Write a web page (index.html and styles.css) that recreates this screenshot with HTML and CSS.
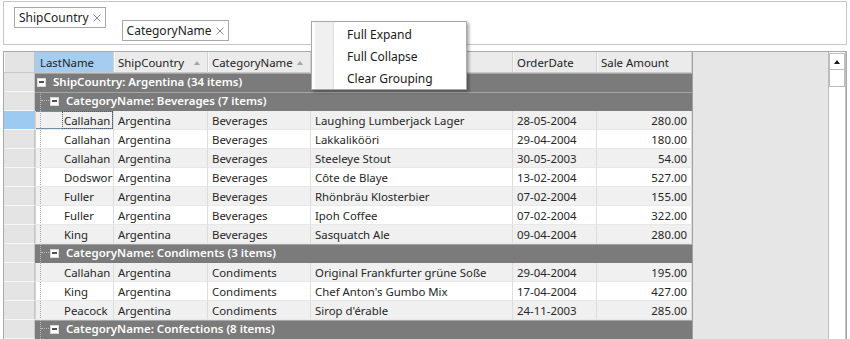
FILE: index.html
```html
<!DOCTYPE html>
<html lang="en">
<head>
    <meta charset="UTF-8" />
    <title>Grid Grouping</title>
    <link rel="stylesheet" href="styles.css">
</head>
<body>
    <!-- Group by panel -->
    <div class="group-panel">
        <span class="chip">ShipCountry <svg class="chip-x" width="8" height="8" viewBox="0 0 8 8"><path d="M0.5 0.5 L7.5 7.5 M7.5 0.5 L0.5 7.5" stroke="#8c8c8c" stroke-width="1"/></svg></span>
        <span class="chip chip-lower">CategoryName <svg class="chip-x" width="8" height="8" viewBox="0 0 8 8"><path d="M0.5 0.5 L7.5 7.5 M7.5 0.5 L0.5 7.5" stroke="#8c8c8c" stroke-width="1"/></svg></span>
    </div>

    <div class="grid">
        <div class="grid-body">
            <div class="columns">
                <div class="row header">
                    <div class="cell c-ind"></div>
                    <div class="cell c-last hot">LastName</div>
                    <div class="cell c-country">ShipCountry <span class="sort"></span></div>
                    <div class="cell c-cat">CategoryName <span class="sort"></span></div>
                    <div class="cell c-prod">ProductName</div>
                    <div class="cell c-date">OrderDate</div>
                    <div class="cell c-amt">Sale Amount</div>
                </div>

                <div class="row group">
                    <div class="cell c-ind"></div>
                    <div class="group-cell level1"><span class="toggle"></span>ShipCountry: Argentina (34 items)</div>
                </div>
                <div class="row group">
                    <div class="cell c-ind"></div>
                    <div class="group-cell level2"><span class="toggle"></span>CategoryName: Beverages (7 items)</div>
                </div>

                <div class="row alt current">
                    <div class="cell c-ind"></div>
                    <div class="cell c-last"><span class="indent"></span><span class="val focus">Callahan</span></div>
                    <div class="cell c-country">Argentina</div>
                    <div class="cell c-cat">Beverages</div>
                    <div class="cell c-prod">Laughing Lumberjack Lager</div>
                    <div class="cell c-date">28-05-2004</div>
                    <div class="cell c-amt">280.00</div>
                </div>
                <div class="row">
                    <div class="cell c-ind"></div>
                    <div class="cell c-last"><span class="indent"></span><span class="val">Callahan</span></div>
                    <div class="cell c-country">Argentina</div>
                    <div class="cell c-cat">Beverages</div>
                    <div class="cell c-prod">Lakkalikööri</div>
                    <div class="cell c-date">29-04-2004</div>
                    <div class="cell c-amt">180.00</div>
                </div>
                <div class="row alt">
                    <div class="cell c-ind"></div>
                    <div class="cell c-last"><span class="indent"></span><span class="val">Callahan</span></div>
                    <div class="cell c-country">Argentina</div>
                    <div class="cell c-cat">Beverages</div>
                    <div class="cell c-prod">Steeleye Stout</div>
                    <div class="cell c-date">30-05-2003</div>
                    <div class="cell c-amt">54.00</div>
                </div>
                <div class="row">
                    <div class="cell c-ind"></div>
                    <div class="cell c-last"><span class="indent"></span><span class="val">Dodsworth</span></div>
                    <div class="cell c-country">Argentina</div>
                    <div class="cell c-cat">Beverages</div>
                    <div class="cell c-prod">Côte de Blaye</div>
                    <div class="cell c-date">13-02-2004</div>
                    <div class="cell c-amt">527.00</div>
                </div>
                <div class="row alt">
                    <div class="cell c-ind"></div>
                    <div class="cell c-last"><span class="indent"></span><span class="val">Fuller</span></div>
                    <div class="cell c-country">Argentina</div>
                    <div class="cell c-cat">Beverages</div>
                    <div class="cell c-prod">Rhönbräu Klosterbier</div>
                    <div class="cell c-date">07-02-2004</div>
                    <div class="cell c-amt">155.00</div>
                </div>
                <div class="row">
                    <div class="cell c-ind"></div>
                    <div class="cell c-last"><span class="indent"></span><span class="val">Fuller</span></div>
                    <div class="cell c-country">Argentina</div>
                    <div class="cell c-cat">Beverages</div>
                    <div class="cell c-prod">Ipoh Coffee</div>
                    <div class="cell c-date">07-02-2004</div>
                    <div class="cell c-amt">322.00</div>
                </div>
                <div class="row alt">
                    <div class="cell c-ind"></div>
                    <div class="cell c-last"><span class="indent"></span><span class="val">King</span></div>
                    <div class="cell c-country">Argentina</div>
                    <div class="cell c-cat">Beverages</div>
                    <div class="cell c-prod">Sasquatch Ale</div>
                    <div class="cell c-date">09-04-2004</div>
                    <div class="cell c-amt">280.00</div>
                </div>

                <div class="row group">
                    <div class="cell c-ind"></div>
                    <div class="group-cell level2"><span class="toggle"></span>CategoryName: Condiments (3 items)</div>
                </div>
                <div class="row alt">
                    <div class="cell c-ind"></div>
                    <div class="cell c-last"><span class="indent"></span><span class="val">Callahan</span></div>
                    <div class="cell c-country">Argentina</div>
                    <div class="cell c-cat">Condiments</div>
                    <div class="cell c-prod">Original Frankfurter grüne Soße</div>
                    <div class="cell c-date">29-04-2004</div>
                    <div class="cell c-amt">195.00</div>
                </div>
                <div class="row">
                    <div class="cell c-ind"></div>
                    <div class="cell c-last"><span class="indent"></span><span class="val">King</span></div>
                    <div class="cell c-country">Argentina</div>
                    <div class="cell c-cat">Condiments</div>
                    <div class="cell c-prod">Chef Anton's Gumbo Mix</div>
                    <div class="cell c-date">17-04-2004</div>
                    <div class="cell c-amt">427.00</div>
                </div>
                <div class="row alt">
                    <div class="cell c-ind"></div>
                    <div class="cell c-last"><span class="indent"></span><span class="val">Peacock</span></div>
                    <div class="cell c-country">Argentina</div>
                    <div class="cell c-cat">Condiments</div>
                    <div class="cell c-prod">Sirop d'érable</div>
                    <div class="cell c-date">24-11-2003</div>
                    <div class="cell c-amt">285.00</div>
                </div>

                <div class="row group">
                    <div class="cell c-ind"></div>
                    <div class="group-cell level2"><span class="toggle"></span>CategoryName: Confections (8 items)</div>
                </div>
            </div>

            <div class="empty-area"></div>

            <div class="vscroll">
                <div class="scroll-btn"></div>
                <div class="scroll-thumb"></div>
            </div>
        </div>
    </div>

    <!-- Context menu of the group panel -->
    <div class="context-menu">
        <div class="menu-item">Full Expand</div>
        <div class="menu-item">Full Collapse</div>
        <div class="menu-item">Clear Grouping</div>
    </div>
</body>
</html>
```

FILE: styles.css
```css
/* Main Styles */
body {
    margin: 0;
    padding: 0;
    width: 850px;
    height: 339px;
    overflow: hidden;
    background-color: #ffffff;
    color: #262626;
    font-family: "Noto Sans", "Open Sans", sans-serif;
    font-size: 11.4px;
    position: relative;
}

/* Group Panel */
.group-panel {
    margin: 1px 3px 0 3px;
    height: 44px;
    box-sizing: border-box;
    border: 1px solid #c6c6c6;
    display: flex;
    align-items: flex-start;
    gap: 16px;
    padding: 5px 0 0 10px;
    font-size: 12px;
}

.chip {
    display: flex;
    align-items: center;
    height: 21px;
    box-sizing: border-box;
    border: 1px solid #a8a8a8;
    padding: 0 4px 1px 4px;
    color: #222;
    white-space: nowrap;
}

.chip-lower {
    margin-top: 13px;
}

.chip-x {
    margin-left: 4px;
    margin-top: 1px;
}

/* Grid */
.grid {
    margin: 6px 3px 0 3px;
    border: 1px solid #a9a9a9;
    height: 300px;
    box-sizing: border-box;
}

.grid-body {
    display: flex;
    height: 100%;
}

.columns {
    width: 688px;
    flex: none;
}

.row {
    display: flex;
    height: 19px;
    background-color: #ffffff;
}

.row.alt {
    background-color: #f0f0f0;
}

.cell {
    box-sizing: border-box;
    height: 100%;
    border-right: 1px solid #dddddd;
    border-bottom: 1px solid #e8e8e8;
    padding: 1px 4px 0 4px;
    line-height: 18px;
    white-space: nowrap;
    overflow: hidden;
    flex: none;
    position: relative;
}

.c-ind {
    width: 31px;
    background-color: #e4e4e4;
    border-right: 1px solid #c4c4c4;
    border-bottom: 1px solid #f6f6f6;
}

.c-last    { width: 79px; }
.c-country { width: 94px; }
.c-cat     { width: 103px; }
.c-prod    { width: 202px; }
.c-date    { width: 84px; }
.c-amt     { width: 95px; text-align: right; padding-right: 4px; }

/* Header */
.row.header {
    height: 21px;
    background-color: #ebebeb;
}

.header .cell {
    padding-top: 2px;
    line-height: 18px;
    border-right: 1px solid #d2d2d2;
    border-bottom: 1px solid #c8c8c8;
    box-shadow: inset 1px 0 0 #f8f8f8;
    color: #222;
}

.header .c-ind {
    background-color: #e4e4e4;
    border-right: 1px solid #c4c4c4;
}

.header .c-last.hot {
    background-color: #a4cdf0;
    box-shadow: none;
    padding-left: 5px;
}

.header .c-amt {
    text-align: left;
}

.sort {
    position: absolute;
    right: 7px;
    top: 9px;
    width: 0;
    height: 0;
    border-left: 3.5px solid transparent;
    border-right: 3.5px solid transparent;
    border-bottom: 4px solid #a6a6a6;
}

/* Group rows */
.row.group {
    background-color: #7b7b7b;
}

.group .c-ind {
    border-bottom: 1px solid #f6f6f6;
}

.group-cell {
    flex: none;
    width: 657px;
    box-sizing: border-box;
    height: 100%;
    border-top: 1px solid #a5a5a5;
    padding-bottom: 2px;
    color: #ffffff;
    font-weight: 600;
    font-size: 11.5px;
    line-height: 16px;
    white-space: nowrap;
    position: relative;
    display: flex;
    align-items: center;
}

.group-cell.level1 {
    padding-left: 2px;
}

.group-cell.level2 {
    padding-left: 15px;
}

.group-cell.level2::before {
    content: "";
    position: absolute;
    left: 5px;
    top: -1px;
    height: 19px;
    border-left: 1px dotted #b8b8b8;
}

.group-cell.level2::after {
    content: "";
    position: absolute;
    left: 6px;
    top: 7px;
    width: 8px;
    border-top: 1px dotted #b8b8b8;
}

.toggle {
    width: 9px;
    height: 9px;
    box-sizing: border-box;
    background-color: #ffffff;
    border: 1px solid #d8d8d8;
    position: relative;
    margin-right: 7px;
    flex: none;
}

.toggle::after {
    content: "";
    position: absolute;
    left: 1px;
    top: 2px;
    width: 5px;
    height: 2px;
    background-color: #505050;
}

/* Data rows */
.c-last {
    padding: 0;
}

.indent {
    position: absolute;
    left: 0;
    top: 0;
    width: 27px;
    height: 100%;
    border-left: 1px solid #d4d4d4;
    box-sizing: border-box;
}

.indent::before {
    content: "";
    position: absolute;
    left: 4px;
    top: 0;
    height: 19px;
    border-left: 1px dotted #a8a8a8;
}

.val {
    display: block;
    margin-left: 27px;
    padding: 1px 0 0 2px;
    height: 18px;
    box-sizing: border-box;
    line-height: 17px;
}

.val.focus {
    outline: 1px dotted #5a5a5a;
    outline-offset: -1px;
}

.current .c-ind {
    background-color: #9ccaf0;
}

.current .c-last {
    box-shadow: inset 0 0 0 1px #6f8fb0;
}

/* Empty area and scrollbar */
.empty-area {
    flex: 1;
    background-color: #e6e6e6;
    border-left: 1px solid #a0a0a0;
    border-right: 1px solid #bdbdbd;
}

.vscroll {
    width: 17px;
    flex: none;
    background-color: #ffffff;
    border-right: 1px solid #c0c0c0;
    box-sizing: border-box;
}

.scroll-btn {
    height: 17px;
    border: 1px solid #bcbcbc;
    box-sizing: border-box;
    margin-top: 1px;
    position: relative;
}

.scroll-btn::after {
    content: "";
    position: absolute;
    left: 4px;
    top: 6px;
    border-left: 3.5px solid transparent;
    border-right: 3.5px solid transparent;
    border-bottom: 4px solid #1a1a2e;
}

.scroll-thumb {
    height: 17px;
    border: 1px solid #bcbcbc;
    border-top: none;
    box-sizing: border-box;
}

/* Context menu */
.context-menu {
    position: absolute;
    left: 311px;
    top: 21px;
    width: 156px;
    height: 69px;
    box-sizing: border-box;
    background-color: #ffffff;
    border: 1px solid #a8a8a8;
    box-shadow: 2px 2px 3px rgba(0, 0, 0, 0.35);
    padding: 2px 0 0 3px;
    font-size: 12px;
    background-image: linear-gradient(to right, #ffffff 3px, #f0f0f0 3px, #f0f0f0 21px, #e2e2e2 21px, #e2e2e2 22px, #ffffff 22px);
}

.menu-item {
    height: 22px;
    line-height: 22px;
    padding-left: 32px;
    color: #1a1a1a;
}
```
